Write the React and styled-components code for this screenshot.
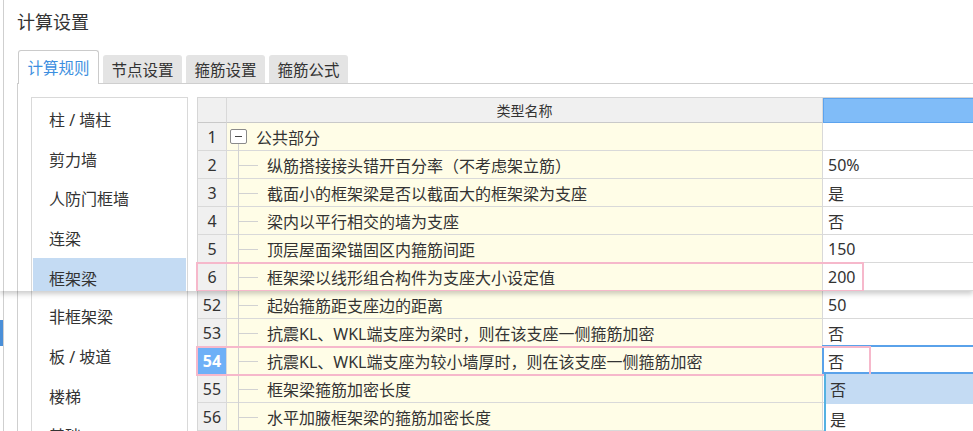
import React from 'react';
import styled, { createGlobalStyle } from 'styled-components';

const GlobalStyle = createGlobalStyle`
  html, body {
    margin: 0;
    padding: 0;
    background: #fff;
  }
  body {
    font-family: "Noto Sans", "Noto Sans CJK SC", sans-serif;
    color: #333;
  }
`;

const Page = styled.div`
  width: 973px;
  height: 431px;
  overflow: hidden;
  display: flex;
  flex-direction: column;
  background: #fff;
`;

const Upper = styled.div`
  flex: none;
  height: 291px;
  display: flex;
  position: relative;
  z-index: 2;
  background: #fff;
  overflow: hidden;
  box-shadow: 0 3px 5px rgba(0, 0, 0, 0.2);
`;

const Lower = styled.div`
  flex: 1;
  display: flex;
  position: relative;
  z-index: 1;
  overflow: hidden;
`;

const Gutter = styled.div`
  flex: none;
  width: 3px;
  padding-top: ${(p) => p.$markTop || 0}px;
`;

const GutterMark = styled.div`
  height: 26px;
  background: #4a8fd8;
`;

const Frame = styled.div`
  flex: 1;
  min-width: 0;
  display: flex;
  flex-direction: column;
  border-left: 1px solid #cfcfcf;
  padding-left: 13px;
`;

const Title = styled.div`
  padding-top: 10px;
  height: 24px;
  line-height: 24px;
  font-size: 18px;
  color: #333;
`;

const TabBar = styled.div`
  display: flex;
  align-items: flex-end;
  gap: 4px;
  margin-top: 16px;
  padding-left: 1px;
  height: 33px;
`;

const Tab = styled.div`
  position: relative;
  z-index: 1;
  box-sizing: border-box;
  display: flex;
  align-items: center;
  justify-content: center;
  width: ${(p) => (p.$active ? 81 : 79)}px;
  height: ${(p) => (p.$active ? 34 : 28)}px;
  margin-bottom: ${(p) => (p.$active ? -1 : 0)}px;
  padding-top: ${(p) => (p.$active ? 0 : 1)}px;
  font-size: 15.5px;
  color: ${(p) => (p.$active ? '#3d8fe0' : '#333')};
  background: ${(p) => (p.$active ? '#fff' : '#e4e4e4')};
  border: ${(p) => (p.$active ? '1px solid #cbcbcb' : 'none')};
  border-bottom: none;
  border-radius: 3px 3px 0 0;
`;

const Content = styled.div`
  flex: 1;
  min-height: 0;
  display: flex;
  gap: 9px;
  border-left: 1px solid #cfcfcf;
  border-top: ${(p) => (p.$top ? '1px solid #cfcfcf' : 'none')};
  padding: ${(p) => (p.$top ? '13px' : '0')} 0 0 13px;
`;

const ListBox = styled.div`
  flex: none;
  box-sizing: border-box;
  width: 157px;
  border: 1px solid #d9d9d9;
  border-top: ${(p) => (p.$top ? '1px solid #d9d9d9' : 'none')};
  border-bottom: none;
  padding: ${(p) => (p.$top ? 1 : 5.5)}px 1px 0;
  display: flex;
  flex-direction: column;
`;

const ListItem = styled.div`
  flex: none;
  height: 39.7px;
  display: flex;
  align-items: center;
  padding-left: 16px;
  font-size: 16px;
  color: #333;
  background: ${(p) => (p.$selected ? '#c4dbf3' : 'transparent')};
`;

const Table = styled.div`
  flex: none;
  width: 900px;
  border-left: 1px solid #d6d6d6;
  border-top: ${(p) => (p.$top ? '1px solid #d6d6d6' : 'none')};
  display: flex;
  flex-direction: column;
`;

const Row = styled.div`
  position: relative;
  flex: none;
  display: grid;
  grid-template-columns: 29px 596px 1fr;
  height: ${(p) => (p.$header ? 25 : 28)}px;
`;

const Cell = styled.div`
  box-sizing: border-box;
  position: relative;
  display: flex;
  align-items: center;
  border-right: 1px solid #d9d9d9;
  border-bottom: 1px solid #d9d9d9;
  font-size: 16px;
  color: #333;
  white-space: nowrap;
`;

const HeadCell = styled(Cell)`
  justify-content: center;
  background: #f0f0f0;
  font-size: 14px;
  border-bottom-color: #c9c9c9;
`;

const ValueHead = styled(Cell)`
  background: #80bcf8;
  border: 1px solid #5ca3ee;
`;

const NumCell = styled(Cell)`
  justify-content: center;
  background: ${(p) => (p.$active ? '#6eb0f7' : '#f0f0f0')};
  color: ${(p) => (p.$active ? '#fff' : '#333')};
  font-weight: ${(p) => (p.$active ? 700 : 400)};
  font-size: 16px;
`;

const NameCell = styled(Cell)`
  background: #fffde7;
  padding-left: ${(p) => (p.$parent ? 3 : 40)}px;

  &::before {
    content: '';
    position: absolute;
    left: 11px;
    top: ${(p) => (p.$parent ? 21 : 0)}px;
    bottom: -1px;
    border-left: 1px solid #d2d2d2;
  }

  &::after {
    content: '';
    position: absolute;
    left: 12px;
    width: ${(p) => (p.$parent ? 0 : 19)}px;
    top: 50%;
    border-top: 1px solid #d2d2d2;
  }
`;

const ExpandBox = styled.span`
  box-sizing: border-box;
  width: 17px;
  height: 15px;
  border: 1px solid #8a8a8a;
  border-radius: 2px;
  margin-right: 9px;
  display: flex;
  align-items: center;
  justify-content: center;
  background: #fff;

  &::before {
    content: '';
    width: 7px;
    border-top: 1px solid #444;
  }
`;

const ValueCell = styled(Cell)`
  background: #fff;
  padding-left: 5px;
`;

const Highlight = styled.div`
  position: absolute;
  left: -2px;
  top: -1px;
  bottom: -1px;
  width: ${(p) => p.$width}px;
  box-sizing: border-box;
  border: 2px solid #f6b8cb;
  pointer-events: none;
  z-index: 3;
`;

const EditBox = styled.div`
  position: absolute;
  left: -1px;
  top: -2px;
  right: 0;
  bottom: 0;
  border: 2px solid #5aa2ea;
  border-right: none;
  z-index: 2;
`;

const Dropdown = styled.div`
  position: absolute;
  left: 1px;
  top: 100%;
  width: 200px;
  border-left: 2px solid #55b2e2;
  background: #fff;
  z-index: 4;
`;

const Option = styled.div`
  height: 30px;
  display: flex;
  align-items: center;
  padding-left: 4px;
  font-size: 16px;
  color: #333;
  background: ${(p) => (p.$selected ? '#c4dbf3' : '#fff')};
`;

const topItems = ['柱 / 墙柱', '剪力墙', '人防门框墙', '连梁', '框架梁'];
const bottomItems = ['非框架梁', '板 / 坡道', '楼梯', '基础'];

const topRows = [
  { n: 1, name: '公共部分', value: '', parent: true },
  { n: 2, name: '纵筋搭接接头错开百分率（不考虑架立筋）', value: '50%' },
  { n: 3, name: '截面小的框架梁是否以截面大的框架梁为支座', value: '是' },
  { n: 4, name: '梁内以平行相交的墙为支座', value: '否' },
  { n: 5, name: '顶层屋面梁锚固区内箍筋间距', value: '150' },
  { n: 6, name: '框架梁以线形组合构件为支座大小设定值', value: '200', mark: 668 },
];

const bottomRows = [
  { n: 52, name: '起始箍筋距支座边的距离', value: '50' },
  { n: 53, name: '抗震KL、WKL端支座为梁时，则在该支座一侧箍筋加密', value: '否' },
  { n: 54, name: '抗震KL、WKL端支座为较小墙厚时，则在该支座一侧箍筋加密', value: '否', mark: 675, editing: true },
  { n: 55, name: '框架梁箍筋加密长度', value: '' },
  { n: 56, name: '水平加腋框架梁的箍筋加密长度', value: '' },
];

const tabs = ['计算规则', '节点设置', '箍筋设置', '箍筋公式'];

const DataRow = ({ row }) => (
  <Row>
    <NumCell $active={row.editing}>{row.n}</NumCell>
    <NameCell $parent={row.parent}>
      {row.parent && <ExpandBox />}
      {row.name}
    </NameCell>
    <ValueCell>
      {row.value}
      {row.editing && (
        <>
          <EditBox />
          <Dropdown>
            <Option $selected>否</Option>
            <Option>是</Option>
          </Dropdown>
        </>
      )}
    </ValueCell>
    {row.mark && <Highlight $width={row.mark} />}
  </Row>
);

export default function App() {
  return (
    <Page>
      <GlobalStyle />
      <Upper>
        <Gutter />
        <Frame>
          <Title>计算设置</Title>
          <TabBar>
            {tabs.map((t, i) => (
              <Tab key={t} $active={i === 0}>
                {t}
              </Tab>
            ))}
          </TabBar>
          <Content $top>
            <ListBox $top>
              {topItems.map((item, i) => (
                <ListItem key={item} $selected={i === 4}>
                  {item}
                </ListItem>
              ))}
            </ListBox>
            <Table $top>
              <Row $header>
                <HeadCell />
                <HeadCell>类型名称</HeadCell>
                <ValueHead />
              </Row>
              {topRows.map((row) => (
                <DataRow key={row.n} row={row} />
              ))}
            </Table>
          </Content>
        </Frame>
      </Upper>
      <Lower>
        <Gutter $markTop={29}>
          <GutterMark />
        </Gutter>
        <Frame>
          <Content>
            <ListBox>
              {bottomItems.map((item) => (
                <ListItem key={item}>{item}</ListItem>
              ))}
            </ListBox>
            <Table>
              {bottomRows.map((row) => (
                <DataRow key={row.n} row={row} />
              ))}
            </Table>
          </Content>
        </Frame>
      </Lower>
    </Page>
  );
}
